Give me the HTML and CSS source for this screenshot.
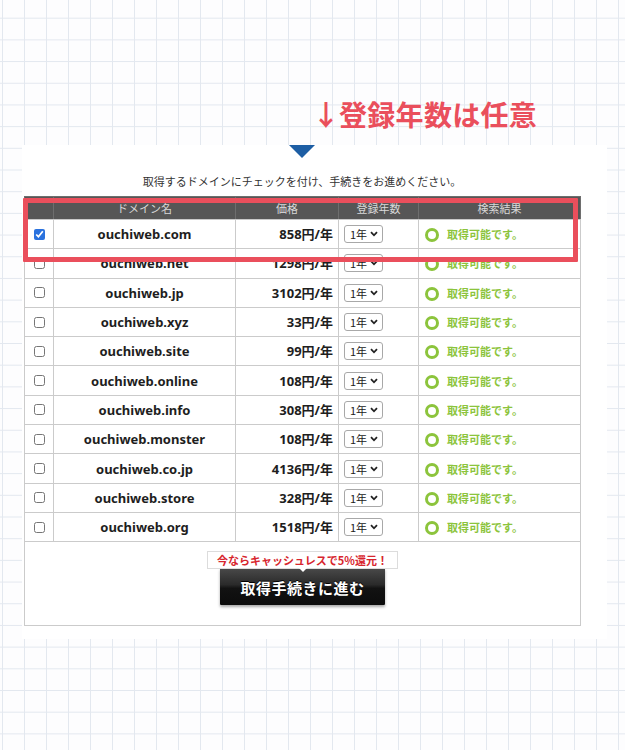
FILE: index.html
```html
<!DOCTYPE html>
<html lang="ja">
<head>
<meta charset="utf-8">
<title>ドメイン検索結果</title>
<link rel="stylesheet" href="styles.css">
</head>
<body>
<div class="note"><span class="arrow">↓</span>登録年数は任意</div>
<div class="panel">
  <div class="tri"></div>
  <div class="lead">取得するドメインにチェックを付け、手続きをお進めください。</div>
  <div class="tablewrap">
    <table class="domains">
      <colgroup>
        <col class="c-chk"><col class="c-name"><col class="c-price"><col class="c-year"><col class="c-res">
      </colgroup>
      <thead>
        <tr><th></th><th>ドメイン名</th><th>価格</th><th>登録年数</th><th>検索結果</th></tr>
      </thead>
      <tbody>
        <tr><td class="chk"><input type="checkbox" checked></td><td class="name">ouchiweb.com</td><td class="price">858円/年</td><td class="year"><span class="sel">1年<svg width="8" height="6" viewBox="0 0 8 6"><path d="M1 1.2 4 4.3 7 1.2" fill="none" stroke="#222" stroke-width="1.8"/></svg></span></td><td class="res"><span class="ring"></span>取得可能です。</td></tr>
        <tr><td class="chk"><input type="checkbox"></td><td class="name">ouchiweb.net</td><td class="price">1298円/年</td><td class="year"><span class="sel">1年<svg width="8" height="6" viewBox="0 0 8 6"><path d="M1 1.2 4 4.3 7 1.2" fill="none" stroke="#222" stroke-width="1.8"/></svg></span></td><td class="res"><span class="ring"></span>取得可能です。</td></tr>
        <tr><td class="chk"><input type="checkbox"></td><td class="name">ouchiweb.jp</td><td class="price">3102円/年</td><td class="year"><span class="sel">1年<svg width="8" height="6" viewBox="0 0 8 6"><path d="M1 1.2 4 4.3 7 1.2" fill="none" stroke="#222" stroke-width="1.8"/></svg></span></td><td class="res"><span class="ring"></span>取得可能です。</td></tr>
        <tr><td class="chk"><input type="checkbox"></td><td class="name">ouchiweb.xyz</td><td class="price">33円/年</td><td class="year"><span class="sel">1年<svg width="8" height="6" viewBox="0 0 8 6"><path d="M1 1.2 4 4.3 7 1.2" fill="none" stroke="#222" stroke-width="1.8"/></svg></span></td><td class="res"><span class="ring"></span>取得可能です。</td></tr>
        <tr><td class="chk"><input type="checkbox"></td><td class="name">ouchiweb.site</td><td class="price">99円/年</td><td class="year"><span class="sel">1年<svg width="8" height="6" viewBox="0 0 8 6"><path d="M1 1.2 4 4.3 7 1.2" fill="none" stroke="#222" stroke-width="1.8"/></svg></span></td><td class="res"><span class="ring"></span>取得可能です。</td></tr>
        <tr><td class="chk"><input type="checkbox"></td><td class="name">ouchiweb.online</td><td class="price">108円/年</td><td class="year"><span class="sel">1年<svg width="8" height="6" viewBox="0 0 8 6"><path d="M1 1.2 4 4.3 7 1.2" fill="none" stroke="#222" stroke-width="1.8"/></svg></span></td><td class="res"><span class="ring"></span>取得可能です。</td></tr>
        <tr><td class="chk"><input type="checkbox"></td><td class="name">ouchiweb.info</td><td class="price">308円/年</td><td class="year"><span class="sel">1年<svg width="8" height="6" viewBox="0 0 8 6"><path d="M1 1.2 4 4.3 7 1.2" fill="none" stroke="#222" stroke-width="1.8"/></svg></span></td><td class="res"><span class="ring"></span>取得可能です。</td></tr>
        <tr><td class="chk"><input type="checkbox"></td><td class="name">ouchiweb.monster</td><td class="price">108円/年</td><td class="year"><span class="sel">1年<svg width="8" height="6" viewBox="0 0 8 6"><path d="M1 1.2 4 4.3 7 1.2" fill="none" stroke="#222" stroke-width="1.8"/></svg></span></td><td class="res"><span class="ring"></span>取得可能です。</td></tr>
        <tr><td class="chk"><input type="checkbox"></td><td class="name">ouchiweb.co.jp</td><td class="price">4136円/年</td><td class="year"><span class="sel">1年<svg width="8" height="6" viewBox="0 0 8 6"><path d="M1 1.2 4 4.3 7 1.2" fill="none" stroke="#222" stroke-width="1.8"/></svg></span></td><td class="res"><span class="ring"></span>取得可能です。</td></tr>
        <tr><td class="chk"><input type="checkbox"></td><td class="name">ouchiweb.store</td><td class="price">328円/年</td><td class="year"><span class="sel">1年<svg width="8" height="6" viewBox="0 0 8 6"><path d="M1 1.2 4 4.3 7 1.2" fill="none" stroke="#222" stroke-width="1.8"/></svg></span></td><td class="res"><span class="ring"></span>取得可能です。</td></tr>
        <tr><td class="chk"><input type="checkbox"></td><td class="name">ouchiweb.org</td><td class="price">1518円/年</td><td class="year"><span class="sel">1年<svg width="8" height="6" viewBox="0 0 8 6"><path d="M1 1.2 4 4.3 7 1.2" fill="none" stroke="#222" stroke-width="1.8"/></svg></span></td><td class="res"><span class="ring"></span>取得可能です。</td></tr>
      </tbody>
      <tfoot>
        <tr class="footrow"><td colspan="5" class="foot">
          <div class="badge">今ならキャッシュレスで5%還元！</div>
          <button class="go" type="button">取得手続きに進む</button>
        </td></tr>
      </tfoot>
    </table>
    <div class="mark"></div>
  </div>
</div>
</body>
</html>
```
FILE: styles.css
```css
html, body {
  margin: 0;
  padding: 0;
}
body {
  width: 625px;
  height: 750px;
  overflow: hidden;
  background-color: #fdfdfe;
  background-image:
    linear-gradient(to right, #e3e8ef 1px, transparent 1px),
    linear-gradient(to bottom, #e3e8ef 1px, transparent 1px);
  background-size: 22px 21.7px;
  background-position: 2px -4px;
  font-family: "Noto Sans CJK JP", sans-serif;
  color: #222;
}
.note {
  padding: 100px 0 0 312px;
  height: 29px;
  font-size: 28px;
  line-height: 29px;
  font-weight: 700;
  color: #ea4f5c;
  letter-spacing: 0.3px;
}
.arrow {
  display: inline-block;
  width: 27px;
  text-align: center;
}
.panel {
  margin: 16px 0 0 22px;
  width: 585px;
  background: #fff;
  padding-bottom: 13px;
}
.tri {
  width: 0;
  height: 0;
  margin-left: 267px;
  border-top: 13px solid #1d5ea4;
  border-left: 13.5px solid transparent;
  border-right: 13.5px solid transparent;
}
.lead {
  width: 556px;
  margin: 15px 0 0 2px;
  text-align: center;
  font-size: 11px;
  line-height: 16px;
  color: #333;
}
.tablewrap {
  position: relative;
  width: 556px;
  margin: 7px 0 0 2px;
}
.domains {
  width: 556px;
  border-collapse: collapse;
  table-layout: fixed;
}
.c-chk { width: 29px; }
.c-name { width: 182px; }
.c-price { width: 103px; }
.c-year { width: 80px; }
.c-res { width: 162px; }
.domains thead tr {
  height: 23px;
}
.domains th {
  padding: 0;
  background: #565656;
  color: #d8d8d8;
  font-weight: 400;
  font-size: 11px;
  line-height: 14px;
  border: 1px solid #6e6e6e;
  border-bottom-color: #c9c9c9;
}
.domains tbody tr {
  height: 29.3px;
}
.domains td {
  padding: 0;
  border: 1px solid #cbcbcb;
  vertical-align: middle;
  line-height: 16px;
}
.chk {
  text-align: center;
}
.chk input {
  display: block;
  margin: 0 auto;
  width: 11px;
  height: 11px;
  accent-color: #2a72de;
}
.name {
  text-align: center;
  font-family: "Noto Sans", "Noto Sans CJK JP", sans-serif;
  font-weight: 700;
  font-size: 13px;
  color: #1e1e1e;
}
.price {
  text-align: right;
  padding-right: 5px !important;
  font-family: "Noto Sans", "Noto Sans CJK JP", sans-serif;
  font-weight: 700;
  font-size: 13px;
  color: #1e1e1e;
}
.year {
  padding-left: 5px !important;
}
.sel {
  display: flex;
  align-items: center;
  justify-content: space-between;
  box-sizing: border-box;
  width: 39px;
  height: 18px;
  padding: 0 4px 0 5px;
  border: 1px solid #a8a8a8;
  border-radius: 3px;
  background: #fff;
  font-size: 11px;
  line-height: 16px;
  color: #222;
}
.res {
  padding-left: 6px !important;
  color: #8cc43c;
  font-weight: 700;
  font-size: 11px;
}
.ring {
  display: inline-block;
  box-sizing: border-box;
  width: 14px;
  height: 14px;
  border: 3px solid #8cc43c;
  border-radius: 50%;
  margin-right: 8px;
  vertical-align: -3px;
}
.domains .footrow {
  height: 84px;
}
.domains td.foot {
  padding: 9px 0 0;
  text-align: center;
  vertical-align: top;
}
.badge {
  position: relative;
  z-index: 1;
  display: inline-block;
  vertical-align: top;
  box-sizing: border-box;
  width: 191px;
  height: 18px;
  border: 1px solid #dcdcdc;
  background: #fff;
  color: #d7252d;
  font-weight: 700;
  font-size: 11px;
  line-height: 16px;
}
.badge::after {
  content: "";
  position: absolute;
  left: 50%;
  bottom: -4px;
  margin-left: -4px;
  border-top: 4px solid #fff;
  border-left: 4px solid transparent;
  border-right: 4px solid transparent;
}
.go {
  display: block;
  width: 165px;
  height: 37px;
  margin: -1px auto 0;
  border: 0;
  border-radius: 1px;
  background: linear-gradient(to bottom, #4a4a4a 0%, #2a2a2a 45%, #121212 55%, #0c0c0c 100%);
  box-shadow: 0 2px 3px rgba(0, 0, 0, 0.35);
  color: #fff;
  font-family: "Noto Sans CJK JP", sans-serif;
  font-weight: 700;
  font-size: 15px;
  letter-spacing: 0.5px;
  text-shadow: 0 -1px 0 #000;
  padding: 2px 0 0;
}
.mark {
  position: absolute;
  left: -1px;
  top: 2px;
  width: 555px;
  height: 64px;
  box-sizing: border-box;
  border: 5px solid #ea4f5c;
  border-radius: 1px;
}
```
